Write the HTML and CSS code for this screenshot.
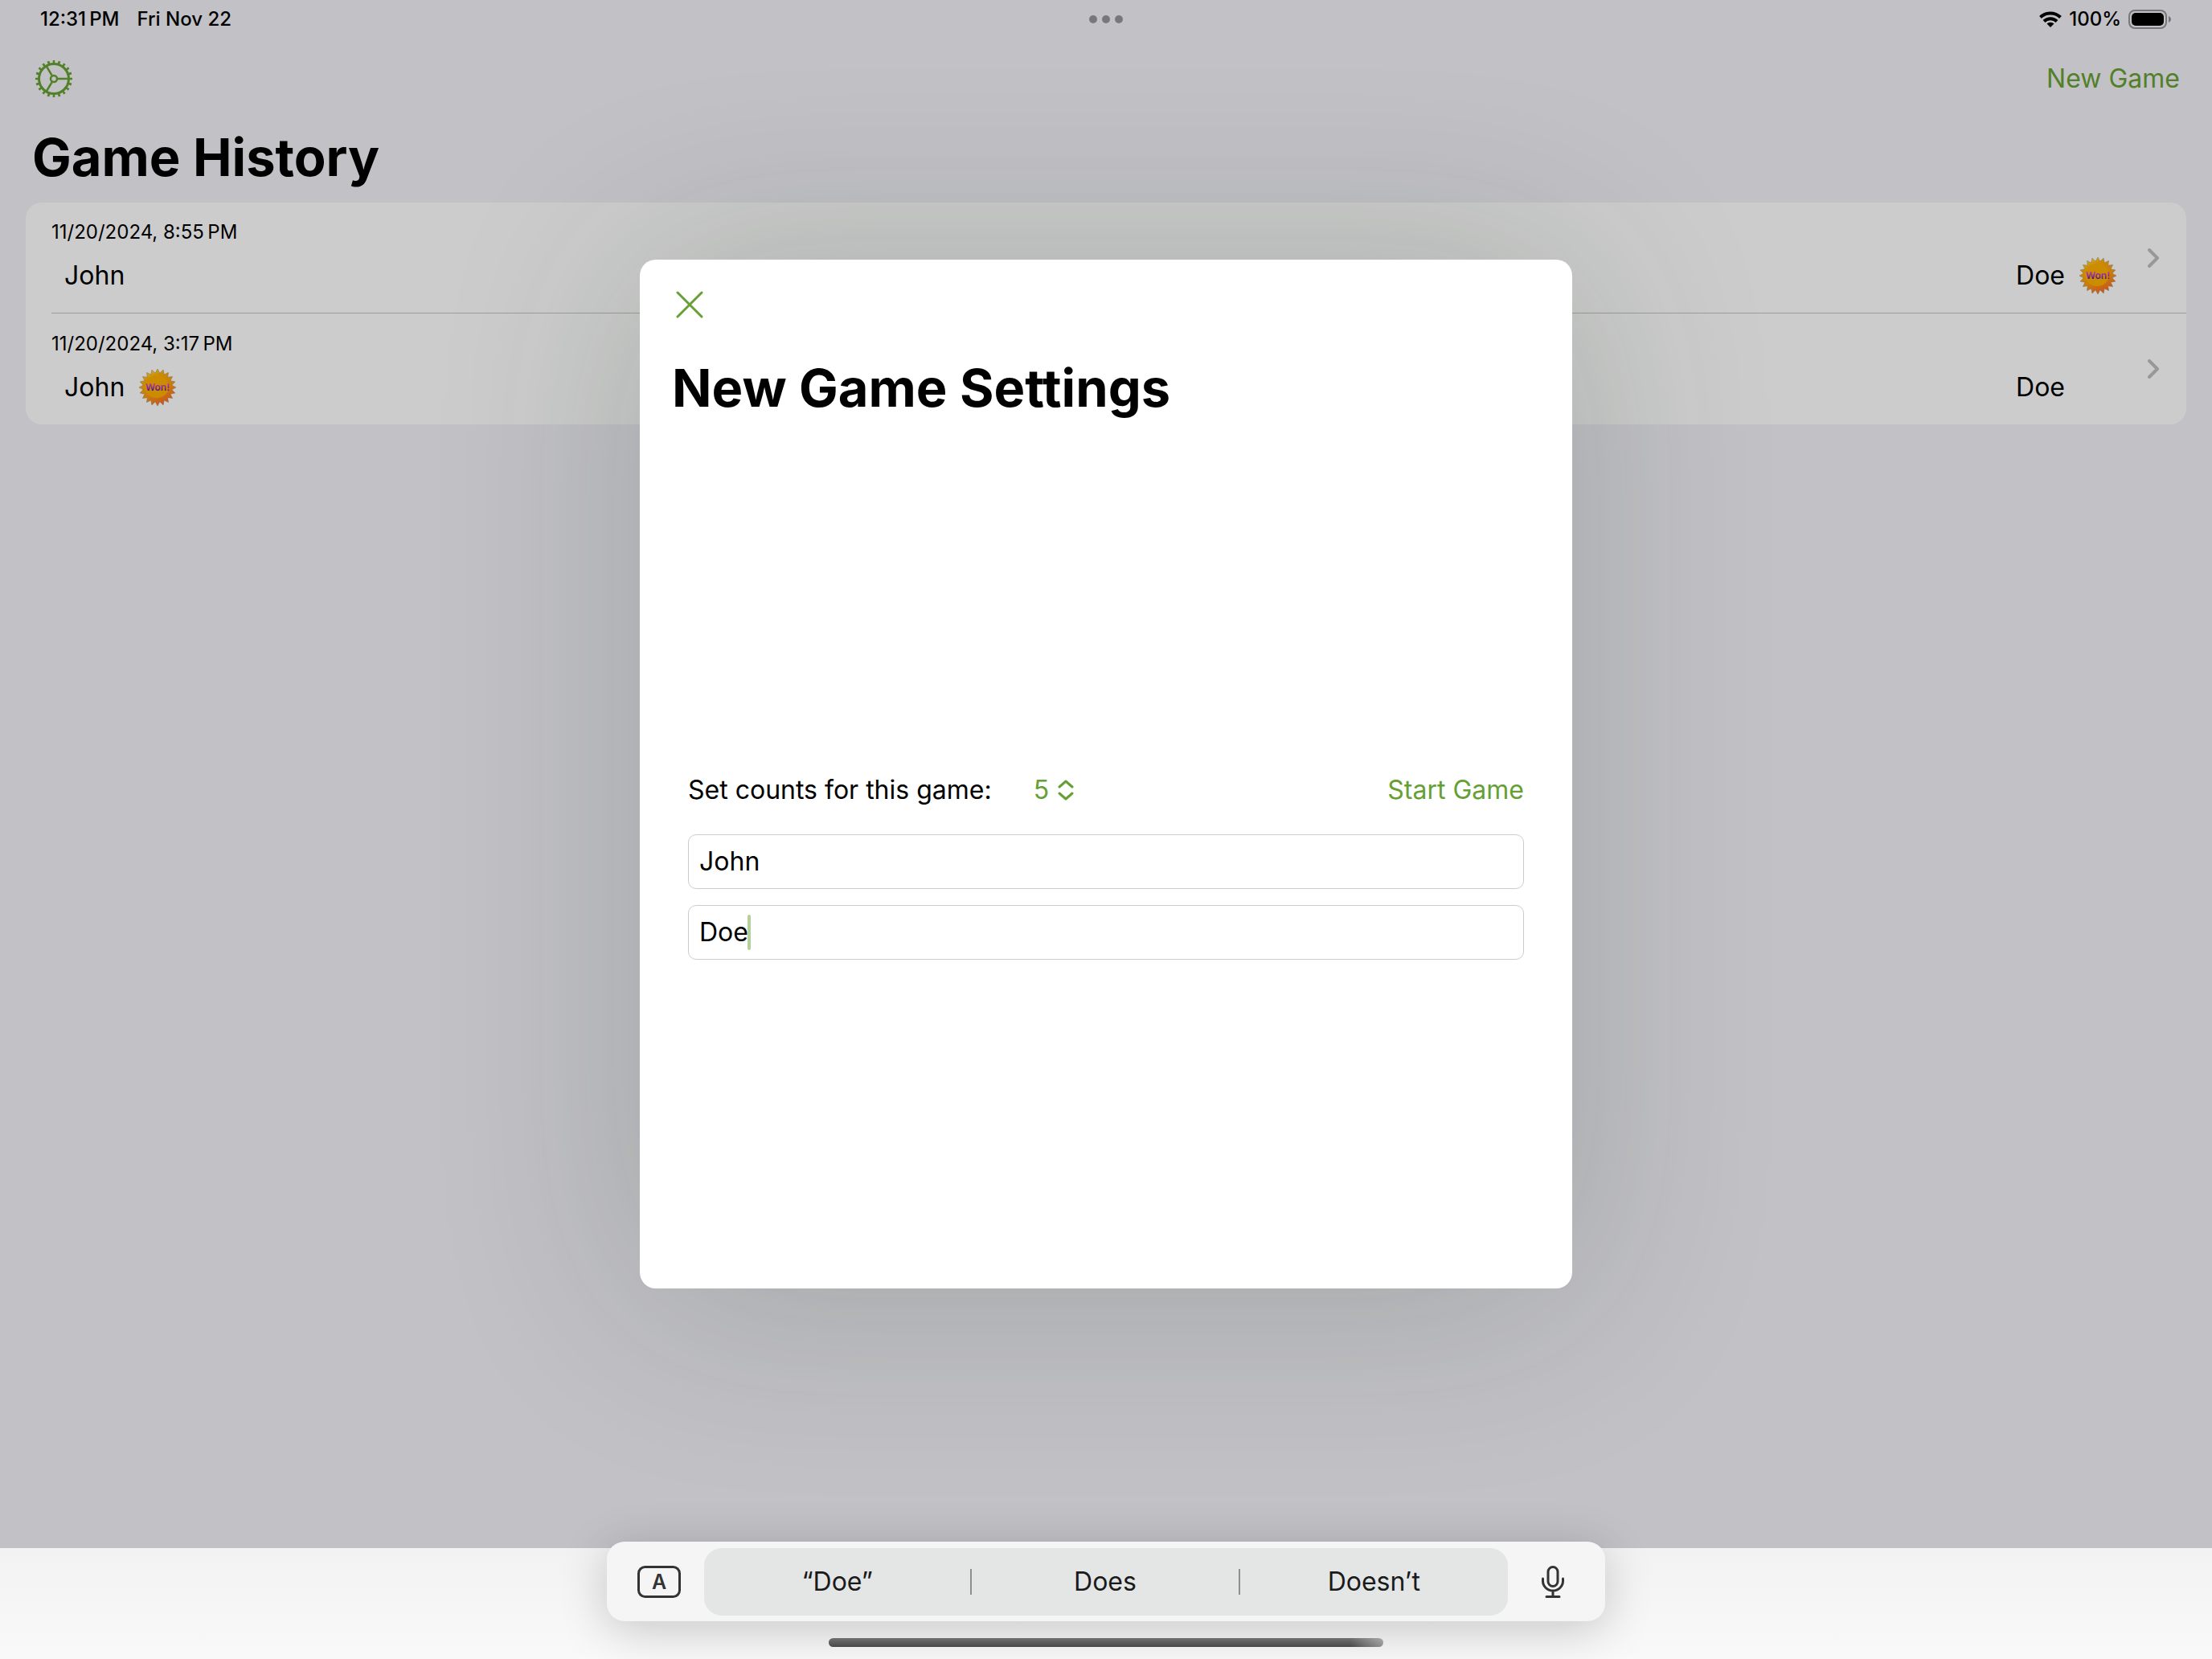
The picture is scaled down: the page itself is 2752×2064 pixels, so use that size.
FILE: index.html
```html
<!DOCTYPE html>
<html lang="en">
<head>
    <meta charset="UTF-8">
    <meta name="viewport" content="width=device-width, initial-scale=1.0">
    <title>Game History</title>
    <link rel="stylesheet" href="styles.css">
</head>
<body>

    <!-- Shared shapes -->
    <svg class="defs" aria-hidden="true">
        <defs>
            <linearGradient id="sun" x1="0.2" y1="0" x2="0.7" y2="1">
                <stop offset="0" stop-color="#d8b840"/>
                <stop offset="0.25" stop-color="#cc8c00"/>
                <stop offset="0.6" stop-color="#cb7c0c"/>
                <stop offset="1" stop-color="#c8501e"/>
            </linearGradient>
            <linearGradient id="won" x1="0" y1="0" x2="0" y2="1">
                <stop offset="0.2" stop-color="#c040a0"/>
                <stop offset="0.9" stop-color="#3c0890"/>
            </linearGradient>
            <symbol id="badge" viewBox="0 0 46 46">
                <polygon fill="url(#sun)" stroke="#7a6a50" stroke-width="0.5" points="23,0 25.8,5.2 30.1,1.1 31.2,7 36.5,4.4 35.7,10.3 41.6,9.5 39,14.8 44.9,15.9 40.8,20.2 46,23 40.8,25.8 44.9,30.1 39,31.2 41.6,36.5 35.7,35.7 36.5,41.6 31.2,39 30.1,44.9 25.8,40.8 23,46 20.2,40.8 15.9,44.9 14.8,39 9.5,41.6 10.3,35.7 4.4,36.5 7,31.2 1.1,30.1 5.2,25.8 0,23 5.2,20.2 1.1,15.9 7,14.8 4.4,9.5 10.3,10.3 9.5,4.4 14.8,7 15.9,1.1 20.2,5.2"/>
                <ellipse cx="22" cy="22" rx="15" ry="14" fill="#cc8c00"/>
                <text x="23" y="27" text-anchor="middle" class="badge-text" fill="url(#won)">Won!</text>
            </symbol>
            <symbol id="chevron" viewBox="0 0 14 24">
                <path d="M2 2l10 10L2 22" fill="none" stroke="currentColor" stroke-width="4" stroke-linecap="round" stroke-linejoin="round"/>
            </symbol>
        </defs>
    </svg>

    <main class="history">
        <div class="status-bar">
            <div class="status-left"><span>12:31&#8239;PM</span><span>Fri Nov 22</span></div>
            <div class="dots"><i></i><i></i><i></i></div>
            <div class="status-right">
                <svg width="28" height="20" viewBox="0 0 28 20" fill="none" stroke="#000" stroke-width="4">
                    <path d="M1.500 7.500a18 18 0 0 1 25 0"/>
                    <path d="M6 12.500a11.500 11.500 0 0 1 16 0"/>
                    <path d="M14 20l-4.500-4.500a6.500 6.500 0 0 1 9 0z" fill="#000" stroke="none"/>
                </svg>
                <span>100%</span>
                <svg width="54" height="24" viewBox="0 0 54 24">
                    <rect x="1" y="1" width="46" height="22" rx="7" fill="none" stroke="#77767a" stroke-width="2"/>
                    <rect x="4" y="4" width="40" height="16" rx="5"/>
                    <path d="M50 8c4 1.500 4 6.500 0 8z" fill="#77767a"/>
                </svg>
            </div>
        </div>

        <nav class="nav-bar">
            <button type="button" aria-label="Settings">
                <svg width="46" height="46" viewBox="0 0 46 46" fill="none" stroke="currentColor">
                    <circle cx="23" cy="23" r="21" stroke-width="4" pathLength="200" stroke-dasharray="4 6" stroke-dashoffset="2"/>
                    <circle cx="23" cy="23" r="18.500" stroke-width="3"/>
                    <circle cx="23" cy="23" r="4" stroke-width="2.500"/>
                    <path d="M28 23h13M20.500 18.700L13.500 7M20.500 27.300L13.500 39" stroke-width="2.500"/>
                </svg>
            </button>
            <button type="button">New Game</button>
        </nav>

        <h1>Game History</h1>

        <ul class="games">
            <li>
                <a href="#game-2">
                    <span class="game">
                        <span class="date">11/20/2024, 8:55&#8239;PM</span>
                        <span class="players">
                            <span class="player">John</span>
                            <span class="player">Doe <svg class="badge"><use href="#badge"/></svg></span>
                        </span>
                    </span>
                    <svg class="chevron"><use href="#chevron"/></svg>
                </a>
            </li>
            <li>
                <a href="#game-1">
                    <span class="game">
                        <span class="date">11/20/2024, 3:17&#8239;PM</span>
                        <span class="players">
                            <span class="player">John <svg class="badge"><use href="#badge"/></svg></span>
                            <span class="player">Doe <span class="badge"></span></span>
                        </span>
                    </span>
                    <svg class="chevron"><use href="#chevron"/></svg>
                </a>
            </li>
        </ul>

        <div class="overlay">
            <section class="sheet" role="dialog" aria-labelledby="sheet-title">
                <header>
                    <button type="button" class="close" aria-label="Close">
                        <svg width="34" height="34" viewBox="0 0 34 34">
                            <path d="M2 2l30 30M32 2L2 32" stroke="currentColor" stroke-width="3" stroke-linecap="round"/>
                        </svg>
                    </button>
                    <h2 id="sheet-title">New Game Settings</h2>
                </header>
                <form>
                    <div class="count-row">
                        <label for="sets">Set counts for this game:</label>
                        <span class="picker">
                            <select id="sets">
                                <option>1</option>
                                <option>3</option>
                                <option selected>5</option>
                            </select>
                            <svg width="20" height="26" viewBox="0 0 20 26" fill="none" stroke="currentColor" stroke-width="3" stroke-linecap="round" stroke-linejoin="round">
                                <path d="M2 9l8-7 8 7M2 17l8 7 8-7"/>
                            </svg>
                        </span>
                        <button type="submit" class="start">Start Game</button>
                    </div>
                    <div class="field">
                        <input type="text" id="player1" value="John" aria-label="Player 1">
                    </div>
                    <div class="field">
                        <input type="text" id="player2" value="Doe" aria-label="Player 2">
                        <span class="caret"></span>
                    </div>
                </form>
            </section>
        </div>
    </main>

    <footer class="keyboard">
        <div class="shortcuts">
            <button type="button" aria-label="Keyboard">
                <svg width="54" height="40" viewBox="0 0 54 40">
                    <rect x="1.500" y="1.500" width="51" height="37" rx="8" fill="none" stroke="#333" stroke-width="3"/>
                    <text x="27" y="29" text-anchor="middle" class="key-text">A</text>
                </svg>
            </button>
            <div class="suggestions">
                <button type="button">“Doe”</button>
                <button type="button">Does</button>
                <button type="button">Doesn’t</button>
            </div>
            <button type="button" aria-label="Dictate">
                <svg width="28" height="40" viewBox="0 0 28 40" fill="none" stroke="#333" stroke-width="3" stroke-linecap="round">
                    <rect x="8" y="1.500" width="12" height="24" rx="6"/>
                    <path d="M1.500 16v3a12.500 12 0 0 0 25 0v-3M14 31v7M6 38.500h16"/>
                </svg>
            </button>
        </div>
        <div class="home-bar"></div>
    </footer>

</body>
</html>
```

FILE: styles.css
```css
* {
    box-sizing: border-box;
}
body {
    margin: 0;
    min-height: 100vh;
    display: flex;
    flex-direction: column;
    font-family: Inter, "Liberation Sans", sans-serif;
    font-size: 32px;
    line-height: 44px;
    color: #000;
    background: #f6f6f6;
}
h1, h2 {
    margin: 0;
    font-size: 65px;
    line-height: 84px;
    font-weight: 700;
}
button, input, select {
    font: inherit;
    color: inherit;
}
button {
    padding: 0;
    border: none;
    background: none;
    cursor: pointer;
}
svg {
    display: block;
    flex: none;
}
.defs {
    position: absolute;
    width: 0;
    height: 0;
}

/* History screen */
.history {
    position: relative;
    flex: 1;
    overflow: hidden;
    background: #c2c1c6;
}
.status-bar {
    display: grid;
    grid-template-columns: 1fr auto 1fr;
    align-items: center;
    height: 48px;
    padding: 0 50px;
    font-size: 24px;
    font-weight: 500;
}
.status-left {
    display: flex;
    gap: 22px;
}
.status-right {
    display: flex;
    justify-content: flex-end;
    align-items: center;
    gap: 9px;
}
.dots {
    display: flex;
    gap: 6px;
}
.dots i {
    width: 10px;
    height: 10px;
    border-radius: 50%;
    background: #78777c;
}
.nav-bar {
    display: flex;
    justify-content: space-between;
    align-items: center;
    height: 100px;
    padding: 0 40px 0 44px;
    color: #528029;
}
.history h1 {
    padding: 6px 40px 0;
    margin-bottom: 14px;
}
.games {
    margin: 0 32px;
    padding: 0;
    list-style: none;
    border-radius: 20px;
    background: #ccc;
}
.games a {
    display: flex;
    align-items: center;
    height: 138px;
    margin-left: 32px;
    padding-right: 34px;
    color: inherit;
    text-decoration: none;
}
.games li:first-child a {
    border-bottom: 1px solid #9c9c9e;
}
.game {
    flex: 1;
    display: flex;
    flex-direction: column;
    gap: 15px;
    padding-bottom: 2px;
}
.date {
    font-size: 24px;
    line-height: 32px;
}
.players {
    display: flex;
    justify-content: space-between;
    height: 46px;
    padding: 0 39px 0 16px;
}
.player {
    display: flex;
    align-items: center;
    gap: 18px;
}
.badge {
    width: 46px;
    height: 46px;
}
.badge-text {
    font: 600 12px Inter, sans-serif;
}
.chevron {
    width: 14px;
    height: 24px;
    color: #98989a;
}

/* New game sheet */
.overlay {
    position: absolute;
    inset: 0;
    display: flex;
    justify-content: center;
    align-items: center;
}
.sheet {
    display: flex;
    flex-direction: column;
    width: 100%;
    max-width: 1160px;
    min-height: 1280px;
    border-radius: 20px;
    background: #fff;
    box-shadow: 0 10px 360px rgba(20, 50, 30, 0.2);
}
.sheet header {
    padding: 26px 32px;
}
.close {
    display: grid;
    place-items: center;
    width: 60px;
    height: 60px;
    margin-bottom: 32px;
    color: #66a035;
}
.sheet h2 {
    padding-left: 8px;
}
.sheet form {
    flex: 1;
    display: flex;
    flex-direction: column;
    justify-content: center;
    gap: 20px;
    padding: 0 60px;
}
.count-row {
    display: flex;
    align-items: center;
    margin-bottom: 13px;
}
.start {
    margin-left: auto;
    color: #66a035;
}
.picker {
    display: flex;
    align-items: center;
    gap: 10px;
    margin-left: 52px;
    color: #66a035;
}
.picker select {
    appearance: none;
    padding: 0;
    border: none;
    background: none;
}
.field {
    position: relative;
}
.field input {
    display: block;
    width: 100%;
    height: 68px;
    padding: 0 13px;
    border: 1px solid #ccc;
    border-radius: 10px;
    outline: none;
    background: #fff;
}
.caret {
    position: absolute;
    left: 74px;
    top: 12px;
    width: 4px;
    height: 44px;
    border-radius: 2px;
    background: #b4d09b;
}

/* Keyboard bar */
.keyboard {
    position: relative;
    display: flex;
    flex-direction: column;
    align-items: center;
    gap: 21px;
    padding-bottom: 15px;
    background: linear-gradient(#f2f2f2, #f9f9f9);
}
.shortcuts {
    display: grid;
    grid-template-columns: 121px 1fr 121px;
    width: 100%;
    max-width: 1242px;
    margin-top: -8px;
    padding: 8px 0 7px;
    border-radius: 22px;
    background: #f4f5f4;
    box-shadow: 0 10px 60px rgba(0, 0, 0, 0.2);
}
.shortcuts > button {
    display: grid;
    place-items: center;
}
.shortcuts > button:first-child {
    padding-left: 8px;
}
.shortcuts > button:last-child {
    padding-right: 10px;
}
.key-text {
    font: 600 25px Inter, sans-serif;
    fill: #333;
}
.suggestions {
    display: grid;
    grid-template-columns: repeat(3, 1fr);
    align-items: center;
    height: 84px;
    border-radius: 22px;
    background: #e4e5e5;
    color: #1a1a1a;
}
.suggestions button {
    line-height: 32px;
    border-right: 2px solid #8e8f93;
}
.suggestions button:last-child {
    border-right: none;
}
.home-bar {
    width: 690px;
    max-width: 50%;
    height: 11px;
    border-radius: 6px;
    background: linear-gradient(90deg, transparent 94%, rgba(255, 255, 255, 0.4)), linear-gradient(#707070, #484848);
}
```
